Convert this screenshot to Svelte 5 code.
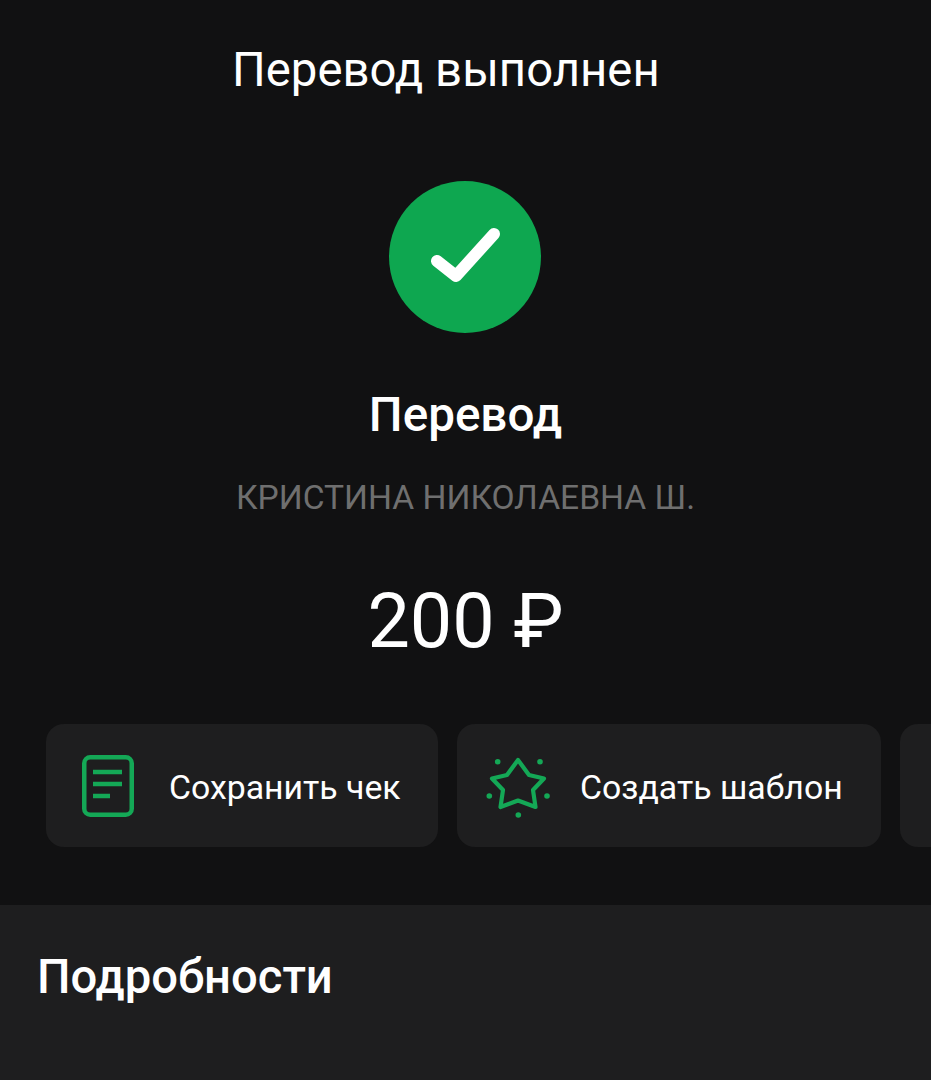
<script lang="ts">
  const actions = [
    { label: "Сохранить чек", icon: "doc" },
    { label: "Создать шаблон", icon: "star" },
  ];
</script>

<main class="page">
  <h1 class="title">Перевод выполнен</h1>

  <div class="status">
    <svg width="152" height="152" viewBox="0 0 152 152">
      <circle cx="76" cy="76" r="76" fill="#0ea750" />
      <path d="M48 80 L67 95 L105 53" fill="none" stroke="#fff" stroke-width="12" stroke-linecap="round" stroke-linejoin="round" />
    </svg>
  </div>

  <p class="kind">Перевод</p>
  <p class="name">КРИСТИНА НИКОЛАЕВНА Ш.</p>
  <p class="sum">200 ₽</p>

  <div class="actions">
    {#each actions as a}
      <button class="action">
        {#if a.icon === "doc"}
          <svg class="doc" width="52" height="62" viewBox="0 0 52 62" fill="none" stroke="#14a856" stroke-width="4.5">
            <rect x="2.25" y="2.25" width="47.5" height="57.5" rx="6" />
            <path d="M11 17H40M11 29H40M11 41H28" />
          </svg>
        {:else}
          <svg class="star" width="64" height="64" viewBox="0 0 64 64" fill="none" stroke="#14a856">
            <path d="M32 6 L43 21 L58 24.5 L47 36 L49.5 53 L32 46.5 L14.5 53 L17 36 L6 24.5 L21 21 Z" stroke-width="4.2" stroke-linejoin="round" />
            <g fill="#14a856" stroke="none">
              <circle cx="11.7" cy="7.7" r="2.8" />
              <circle cx="54" cy="7.7" r="2.8" />
              <circle cx="3.3" cy="42" r="2.8" />
              <circle cx="61" cy="42" r="2.8" />
              <circle cx="32.3" cy="61" r="2.8" />
            </g>
          </svg>
        {/if}
        <span>{a.label}</span>
      </button>
    {/each}
    <div class="action more"></div>
  </div>

  <section class="details">
    <h2>Подробности</h2>
  </section>
</main>

<style>
  :global(body) {
    background: #111112;
  }

  .page {
    height: 1080px;
    overflow: hidden;
    display: flex;
    flex-direction: column;
    background: #111112;
    color: #fff;
    font-family: Roboto, "Noto Sans", sans-serif;
  }

  .title {
    margin: 0;
    padding: 42px 0 0 232px;
    font-size: 47.3px;
    line-height: 56px;
    font-weight: 400;
    white-space: nowrap;
  }

  .status {
    display: flex;
    justify-content: center;
    margin-top: 83px;
    padding-right: 1px;
  }

  .status svg {
    display: block;
  }

  .kind {
    margin: 54px 0 0;
    text-align: center;
    font-size: 47.6px;
    line-height: 56px;
    font-weight: 500;
  }

  .name {
    margin: 35px 0 0;
    text-align: center;
    font-size: 33.6px;
    line-height: 40px;
    color: #6f6f6f;
  }

  .sum {
    margin: 61px 0 0;
    text-align: center;
    font-size: 75.5px;
    line-height: 84px;
  }

  .actions {
    display: flex;
    gap: 19px;
    margin-top: 61px;
    padding-left: 46px;
  }

  .action {
    flex: none;
    display: flex;
    align-items: center;
    height: 123px;
    border: 0;
    border-radius: 18px;
    background: #1e1e1f;
    color: #fff;
    font: inherit;
    font-size: 33.8px;
    white-space: nowrap;
  }

  .action span {
    padding-top: 4px;
  }

  .action:nth-child(1) {
    width: 392px;
    padding: 0 0 0 36px;
  }

  .action:nth-child(2) {
    width: 424px;
    padding: 0 0 0 29px;
  }

  .action svg {
    flex: none;
  }

  .doc {
    margin-right: 35px;
  }

  .star {
    margin-right: 30px;
  }

  .more {
    width: 120px;
  }

  .details {
    flex: 1;
    margin-top: 58px;
    background: #1e1e1f;
    padding: 43px 37px 0;
  }

  .details h2 {
    margin: 0;
    font-size: 47.2px;
    line-height: 58px;
    font-weight: 500;
  }
</style>
